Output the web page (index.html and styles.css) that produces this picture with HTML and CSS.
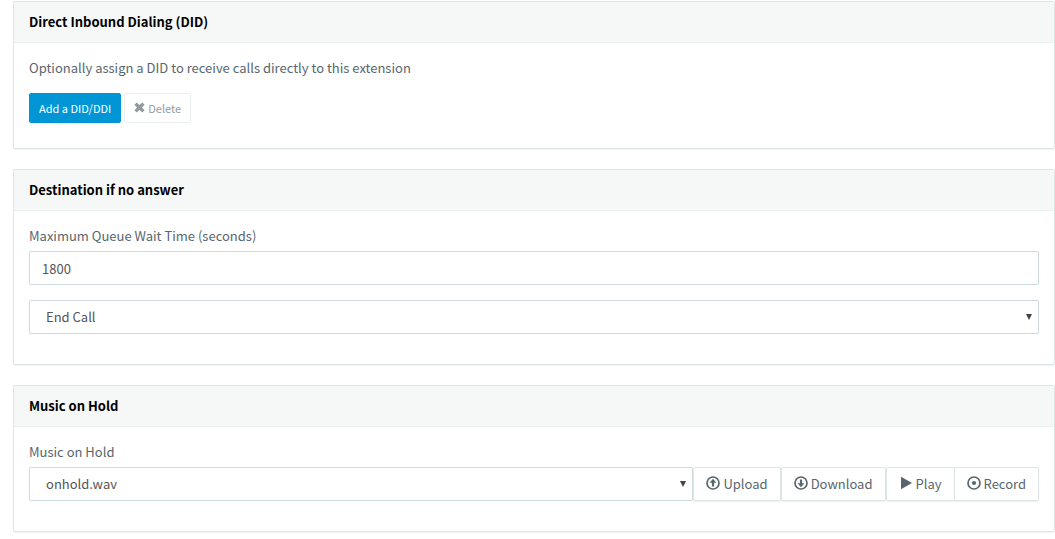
FILE: index.html
```
<!DOCTYPE html>
<html lang="en">
<head>
  <meta charset="UTF-8">
  <meta name="viewport" content="width=device-width, initial-scale=1">
  <title>Queue Settings</title>
  <link rel="stylesheet" href="styles.css">
</head>
<body>

  <section class="panel">
    <h2 class="panel-heading">Direct Inbound Dialing (DID)</h2>
    <div class="panel-body">
      <p class="help">Optionally assign a DID to receive calls directly to this extension</p>
      <div class="actions">
        <button type="button" class="btn btn-sm btn-primary">Add a DID/DDI</button>
        <button type="button" class="btn btn-sm" disabled>
          <svg class="icon-sm" viewBox="0 0 11 11"><path d="M2.7 0.4 5.5 3 8.3 0.4 10.6 2.7 8 5.5 10.6 8.3 8.3 10.6 5.5 8 2.7 10.6 0.4 8.3 3 5.5 0.4 2.7Z"/></svg>
          Delete
        </button>
      </div>
    </div>
  </section>

  <section class="panel">
    <h2 class="panel-heading">Destination if no answer</h2>
    <div class="panel-body">
      <div class="form-group">
        <label for="maxWait">Maximum Queue Wait Time (seconds)</label>
        <input type="text" id="maxWait" class="form-control" value="1800">
      </div>
      <div class="form-group">
        <div class="select">
          <select class="form-control" aria-label="Destination">
            <option>End Call</option>
          </select>
        </div>
      </div>
    </div>
  </section>

  <section class="panel">
    <h2 class="panel-heading">Music on Hold</h2>
    <div class="panel-body">
      <div class="form-group">
        <label for="music">Music on Hold</label>
        <div class="input-group">
          <div class="select">
            <select id="music" class="form-control">
              <option>onhold.wav</option>
            </select>
          </div>
          <button type="button" class="btn">
            <svg class="icon" viewBox="0 0 14 14"><circle class="ring" cx="7" cy="7" r="6"/><path d="M7 2.8 10.4 6.8H8.1V10.6H5.9V6.8H3.6Z"/></svg>
            Upload
          </button>
          <button type="button" class="btn">
            <svg class="icon" viewBox="0 0 14 14"><circle class="ring" cx="7" cy="7" r="6"/><path d="M7 11.2 10.4 7.2H8.1V3.4H5.9V7.2H3.6Z"/></svg>
            Download
          </button>
          <!-- Play and Record share one border -->
          <div class="btn-group">
            <button type="button" class="btn">
              <svg class="icon" viewBox="0 0 14 14"><path d="M2 0.8 13 7 2 13.2Z"/></svg>
              Play
            </button>
            <button type="button" class="btn">
              <svg class="icon" viewBox="0 0 14 14"><circle class="ring" cx="7" cy="7" r="6"/><circle cx="7" cy="7" r="2.1"/></svg>
              Record
            </button>
          </div>
        </div>
      </div>
    </div>
  </section>

</body>
</html>
```
FILE: styles.css
```
* {
  box-sizing: border-box;
}

body {
  margin: 0;
  padding: 1px 0 0 13px;
  background: #fff;
  color: #58666e;
  font-family: "Source Sans Pro", "Noto Sans CJK SC", sans-serif;
  font-size: 13px;
  line-height: 20px;
}

.panel {
  margin-bottom: 20px;
  border: 1px solid #dee5e7;
  border-radius: 2px;
  box-shadow: 0 1px 1px rgba(0, 0, 0, 0.05);
}

.panel-heading {
  margin: 0;
  padding: 10px 15px;
  background: #f6f8f8;
  border-bottom: 1px solid #edf1f2;
  color: #000;
  font-size: 13px;
  font-weight: bold;
}

.panel-body {
  padding: 15px;
}

.help {
  margin: 0 0 15px;
}

.actions {
  display: flex;
  gap: 3px;
  margin-bottom: 10px;
}

.form-group {
  margin-bottom: 15px;
}

label {
  display: block;
  margin-bottom: 5px;
}

.form-control {
  display: block;
  width: 100%;
  height: 34px;
  padding: 6px 12px;
  background: #fff;
  border: 1px solid #cfdadd;
  border-radius: 2px;
  color: #555;
  font: inherit;
}

.select {
  position: relative;
  flex: 1;
}

select.form-control {
  appearance: none;
  padding: 0 16px;
}

.select::after {
  content: "";
  position: absolute;
  top: 14px;
  right: 7px;
  border: 3px solid transparent;
  border-top: 6px solid #444;
  border-bottom: 0;
  pointer-events: none;
}

.btn {
  display: flex;
  align-items: center;
  gap: 3px;
  height: 34px;
  padding: 0 12px;
  background: #fff;
  border: 1px solid #dee5e7;
  border-radius: 2px;
  box-shadow: 0 1px 1px rgba(90, 90, 90, 0.1);
  color: #58666e;
  font: inherit;
  white-space: nowrap;
  cursor: pointer;
}

.btn-sm {
  height: 30px;
  padding: 0 9px;
  font-size: 11px;
  line-height: 18px;
  box-shadow: none;
}

.btn-primary {
  background: #0096d6;
  border-color: #0096d6;
  color: #fff;
}

.btn:disabled {
  opacity: 0.65;
  cursor: default;
}

.input-group,
.btn-group {
  display: flex;
}

.btn-group .btn + .btn {
  margin-left: -1px;
}

.icon,
.icon-sm {
  margin-bottom: 2px;
  fill: currentColor;
}

.icon {
  width: 14px;
  height: 14px;
}

.icon-sm {
  width: 11px;
  height: 11px;
}

.ring {
  fill: none;
  stroke: currentColor;
  stroke-width: 1.7;
}
```
